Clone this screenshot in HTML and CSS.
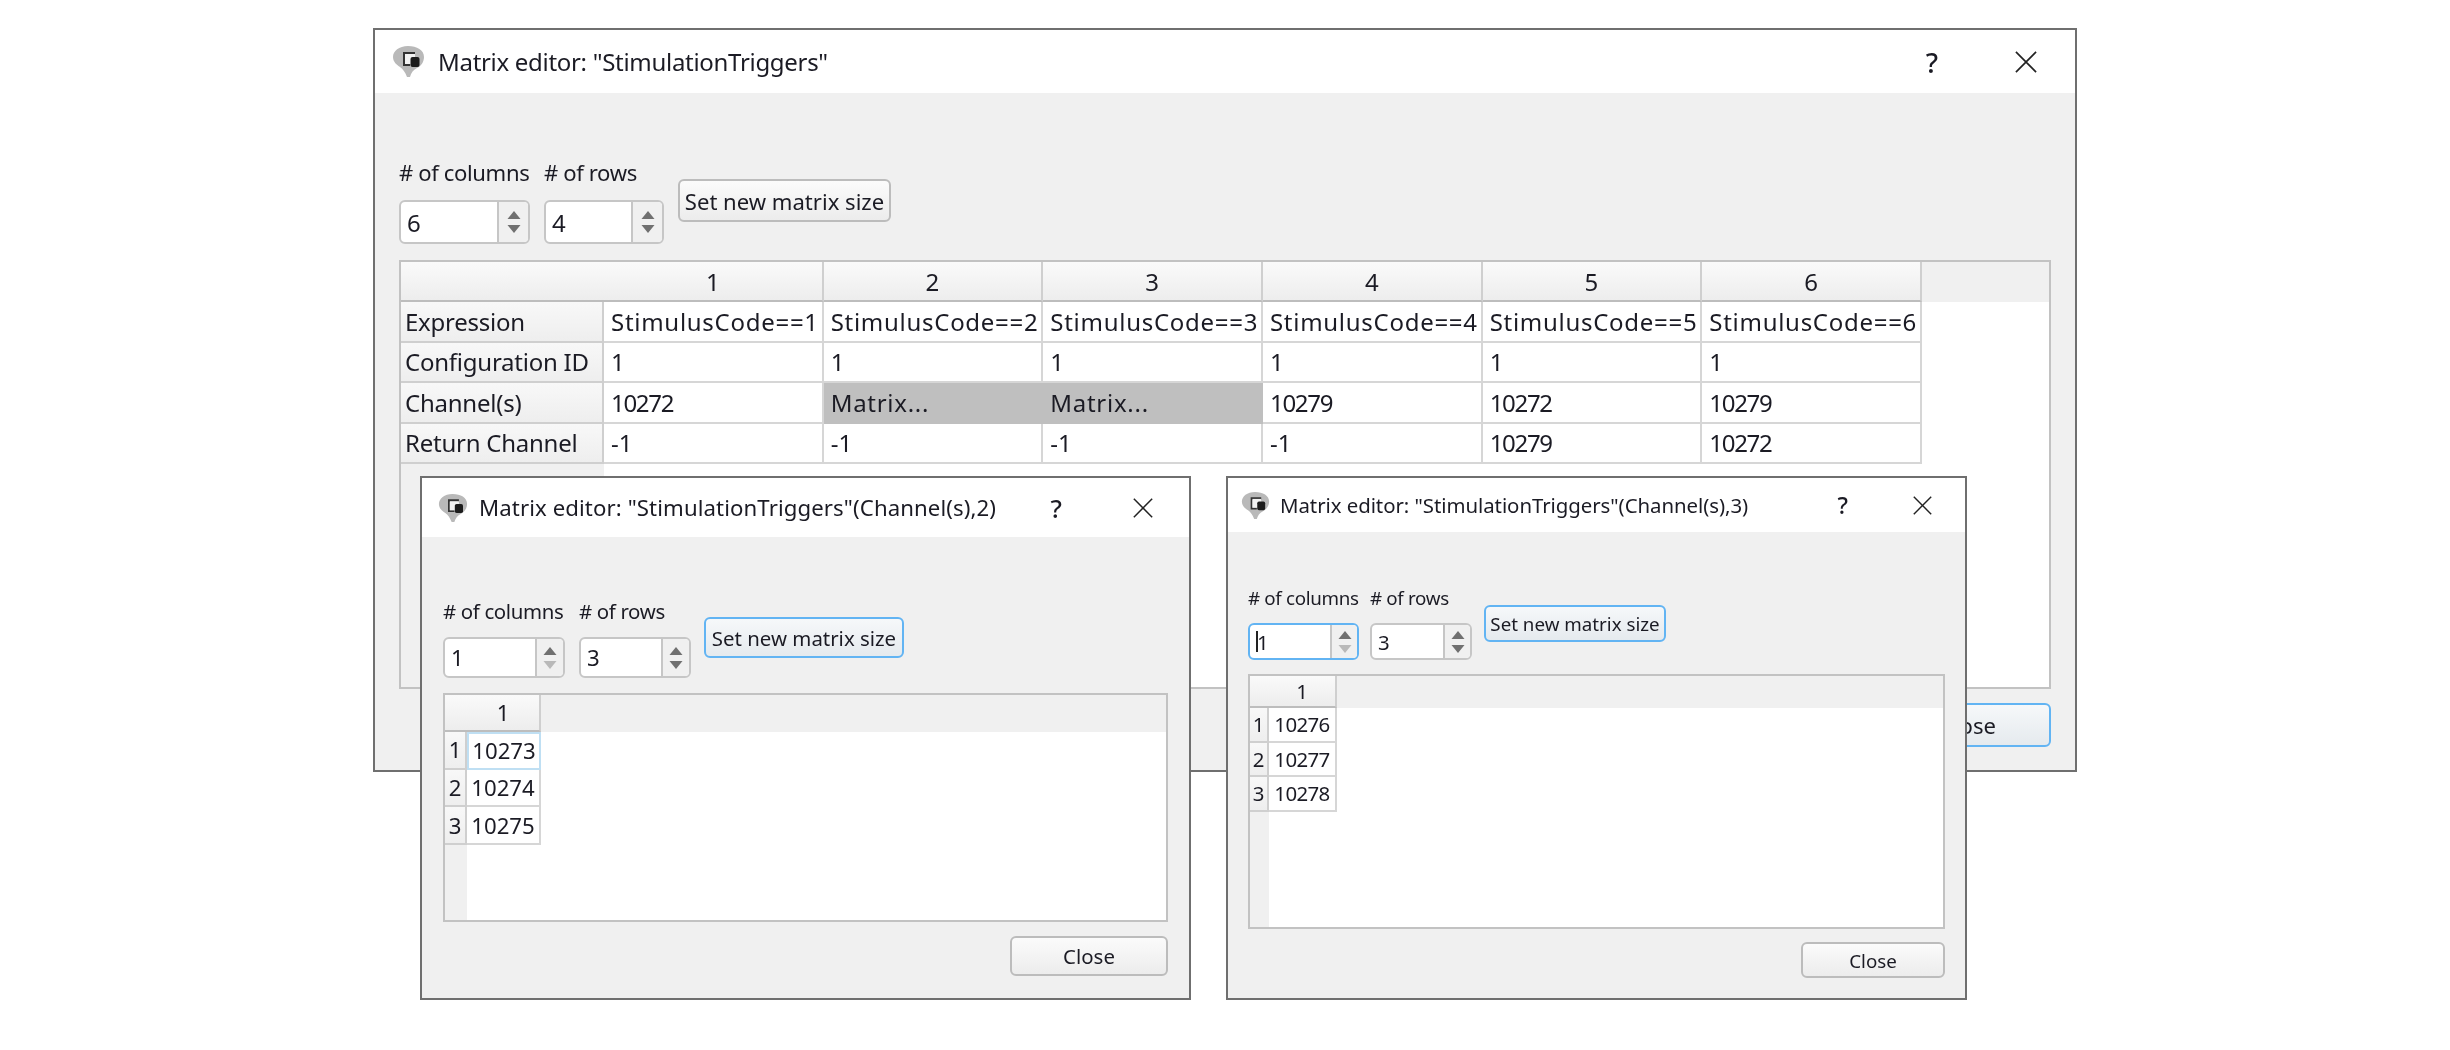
FILE: index.html
```html
<!DOCTYPE html>
<html lang="en">
<head>
<meta charset="utf-8">
<title>Matrix editor</title>
<link rel="stylesheet" href="styles.css">
</head>
<body>
<svg class="defs" width="0" height="0" aria-hidden="true">
  <symbol id="app" viewBox="0 0 33 33">
    <path d="M16 1C7 1 1 6 1 12c0 5 4 8 7 10 3 2 5 5 7 10h3c1-4 3-7 7-9 4-2 7-6 7-11C32 5 25 1 16 1z" fill="#b9b9b9"/>
    <path d="M11 7h12v3H13v9h5v2h-7z" fill="#333"/>
    <path d="M13 9h10v10H13z" fill="#f2f2f2"/>
    <rect x="18.500" y="12" width="9" height="10" rx="2" fill="#1c1c1c"/>
  </symbol>
  <symbol id="x" viewBox="0 0 24 24">
    <path d="M1 1l22 22M23 1L1 23" fill="none" stroke="#222" stroke-width="1.800"/>
  </symbol>
  <symbol id="up" viewBox="0 0 14 10"><path d="M7 1l6.500 8H.5z"/></symbol>
  <symbol id="down" viewBox="0 0 14 10"><path d="M7 9L.5 1h13z"/></symbol>
</svg>

<main class="desktop">

  <section class="dlg dlg-main">
    <header class="titlebar">
      <svg class="app-icon"><use href="#app"/></svg>
      <span class="title">Matrix editor: "StimulationTriggers"</span>
      <span class="help">?</span>
      <svg class="close-x"><use href="#x"/></svg>
    </header>
    <div class="body">
      <div class="controls">
        <div class="field f1">
          <label class="lbl"># of columns</label>
          <div class="spin"><span class="val">6</span><span class="arrows"><svg class="arr"><use href="#up"/></svg><svg class="arr"><use href="#down"/></svg></span></div>
        </div>
        <div class="field f2">
          <label class="lbl"># of rows</label>
          <div class="spin"><span class="val">4</span><span class="arrows"><svg class="arr"><use href="#up"/></svg><svg class="arr"><use href="#down"/></svg></span></div>
        </div>
        <button class="btn set">Set new matrix size</button>
      </div>
      <div class="tbl tbl-6">
        <div class="hc corner"></div>
        <div class="hc">1</div><div class="hc">2</div><div class="hc">3</div><div class="hc">4</div><div class="hc">5</div><div class="hc">6</div><div class="fill-top"></div>

        <div class="rh left">Expression</div>
        <div class="c word">StimulusCode==1</div><div class="c word">StimulusCode==2</div><div class="c word">StimulusCode==3</div><div class="c word">StimulusCode==4</div><div class="c word">StimulusCode==5</div><div class="c word">StimulusCode==6</div><div class="blank"></div>

        <div class="rh left">Configuration ID</div>
        <div class="c">1</div><div class="c">1</div><div class="c">1</div><div class="c">1</div><div class="c">1</div><div class="c">1</div><div class="blank"></div>

        <div class="rh left">Channel(s)</div>
        <div class="c num">10272</div><div class="c word sel">Matrix...</div><div class="c word sel">Matrix...</div><div class="c num">10279</div><div class="c num">10272</div><div class="c num">10279</div><div class="blank"></div>

        <div class="rh left">Return Channel</div>
        <div class="c">-1</div><div class="c">-1</div><div class="c">-1</div><div class="c">-1</div><div class="c num">10279</div><div class="c num">10272</div><div class="blank"></div>

        <div class="fill-left"></div>
      </div>
      <div class="footer"><button class="btn close focus">Close</button></div>
    </div>
  </section>

  <section class="dlg dlg-a">
    <header class="titlebar">
      <svg class="app-icon"><use href="#app"/></svg>
      <span class="title">Matrix editor: "StimulationTriggers"(Channel(s),2)</span>
      <span class="help">?</span>
      <svg class="close-x"><use href="#x"/></svg>
    </header>
    <div class="body">
      <div class="controls">
        <div class="field f1">
          <label class="lbl"># of columns</label>
          <div class="spin"><span class="val">1</span><span class="arrows"><svg class="arr"><use href="#up"/></svg><svg class="arr off"><use href="#down"/></svg></span></div>
        </div>
        <div class="field f2">
          <label class="lbl"># of rows</label>
          <div class="spin"><span class="val">3</span><span class="arrows"><svg class="arr"><use href="#up"/></svg><svg class="arr"><use href="#down"/></svg></span></div>
        </div>
        <button class="btn set focus">Set new matrix size</button>
      </div>
      <div class="tbl tbl-1">
        <div class="hc corner"></div><div class="hc">1</div><div class="fill-top"></div>
        <div class="rh">1</div><div class="c num mid cur">10273</div><div class="blank"></div>
        <div class="rh">2</div><div class="c num mid">10274</div><div class="blank"></div>
        <div class="rh">3</div><div class="c num mid">10275</div><div class="blank"></div>
        <div class="fill-left"></div>
      </div>
      <div class="footer"><button class="btn close">Close</button></div>
    </div>
  </section>

  <section class="dlg dlg-b">
    <header class="titlebar">
      <svg class="app-icon"><use href="#app"/></svg>
      <span class="title">Matrix editor: "StimulationTriggers"(Channel(s),3)</span>
      <span class="help">?</span>
      <svg class="close-x"><use href="#x"/></svg>
    </header>
    <div class="body">
      <div class="controls">
        <div class="field f1">
          <label class="lbl"># of columns</label>
          <div class="spin focus"><span class="val"><i class="caret"></i>1</span><span class="arrows"><svg class="arr"><use href="#up"/></svg><svg class="arr off"><use href="#down"/></svg></span></div>
        </div>
        <div class="field f2">
          <label class="lbl"># of rows</label>
          <div class="spin"><span class="val">3</span><span class="arrows"><svg class="arr"><use href="#up"/></svg><svg class="arr"><use href="#down"/></svg></span></div>
        </div>
        <button class="btn set focus">Set new matrix size</button>
      </div>
      <div class="tbl tbl-1">
        <div class="hc corner"></div><div class="hc">1</div><div class="fill-top"></div>
        <div class="rh">1</div><div class="c num mid">10276</div><div class="blank"></div>
        <div class="rh">2</div><div class="c num mid">10277</div><div class="blank"></div>
        <div class="rh">3</div><div class="c num mid">10278</div><div class="blank"></div>
        <div class="fill-left"></div>
      </div>
      <div class="footer"><button class="btn close">Close</button></div>
    </div>
  </section>

</main>
</body>
</html>
```
FILE: styles.css
```css
* { box-sizing: border-box; }
html, body { margin: 0; padding: 0; background: #fff; }
.defs { position: absolute; }
.desktop {
  position: relative;
  width: 2450px;
  height: 1050px;
  overflow: hidden;
  background: #fff;
  font-family: "Noto Sans", "Open Sans", sans-serif;
  color: #1b1b24;
}

/* Windows on a free canvas */
.dlg {
  position: absolute;
  display: flex;
  flex-direction: column;
  background: #f0f0f0;
  border: 2px solid #6f6f6f;
  font-size: var(--fs);
  filter: blur(0.45px);
}
.dlg-main {
  left: 373px; top: 28px; width: 1704px; height: 744px;
  --fs: 24px; --num-ls: -1.300px; --title-ls: -0.300px; --title-h: 63px; --pad: 24px; --pt: 65px;
  --lbl-h: 30px; --lbl-gap: 12px; --spin-h: 44px;
  --f1: 131px; --f2: 120px; --arrow: 31px; --fgap: 14px; --btn-w: 213px; --btn-h: 43px; --btn-top: 21px; --btn-left: 14px;
  --tbl-gap: 16px; --foot-gap: 14px; --foot-b: 23px; --close-w: 166px; --close-h: 44px;
  --icon: 33px; --icon-l: 17px; --title-l: 13px; --help-r: 137px; --x: 22px; --x-r: 38px;
}
.dlg-a {
  left: 420px; top: 476px; width: 771px; height: 524px; z-index: 2;
  --fs: 22.200px; --num-ls: 0; --title-ls: 0.100px; --title-h: 59px; --pad: 21px; --pt: 61px;
  --lbl-h: 28px; --lbl-gap: 11px; --spin-h: 41px;
  --f1: 122px; --f2: 112px; --arrow: 28px; --fgap: 14px; --btn-w: 200px; --btn-h: 41px; --btn-top: 19px; --btn-left: 13px;
  --tbl-gap: 15px; --foot-gap: 14px; --foot-b: 22px; --close-w: 158px; --close-h: 40px;
  --icon: 30px; --icon-l: 16px; --title-l: 11px; --help-r: 127px; --x: 20px; --x-r: 36px;
}
.dlg-b {
  left: 1226px; top: 476px; width: 741px; height: 524px; z-index: 2;
  --fs: 20.400px; --num-ls: -0.600px; --title-ls: -0.050px; --title-h: 54px; --pad: 20px; --pt: 54px;
  --lbl-h: 26px; --lbl-gap: 11px; --spin-h: 37px;
  --f1: 111px; --f2: 102px; --arrow: 27px; --fgap: 11px; --btn-w: 182px; --btn-h: 37px; --btn-top: 19px; --btn-left: 12px;
  --tbl-gap: 14px; --foot-gap: 13px; --foot-b: 20px; --close-w: 144px; --close-h: 36px;
  --icon: 29px; --icon-l: 13px; --title-l: 10px; --help-r: 117px; --x: 19px; --x-r: 33px;
}

/* Title bar */
.titlebar {
  display: flex;
  align-items: center;
  flex: none;
  height: var(--title-h);
  padding-left: var(--icon-l);
  background: #fff;
}
.app-icon { width: var(--icon); height: var(--icon); flex: none; }
.title { margin-left: var(--title-l); white-space: nowrap; flex: 1; letter-spacing: var(--title-ls); }
.help { position: absolute; right: var(--help-r); font-size: 1.150em; font-weight: 500; }
.close-x { width: var(--x); height: var(--x); margin-right: var(--x-r); flex: none; }

/* Dialog body */
.body {
  flex: 1;
  min-height: 0;
  display: flex;
  flex-direction: column;
  padding: var(--pt) var(--pad) var(--foot-b);
}
.controls { display: flex; align-items: flex-start; margin-bottom: var(--tbl-gap); flex: none; }
.field { display: flex; flex-direction: column; gap: var(--lbl-gap); }
.f1 { width: var(--f1); margin-right: var(--fgap); }
.f2 { width: var(--f2); }
.lbl { height: var(--lbl-h); line-height: calc(var(--lbl-h) - 2px); white-space: nowrap; font-size: 0.92em; letter-spacing: -0.017em; }

.spin {
  display: flex;
  height: var(--spin-h);
  border: 2px solid #c6c6c6;
  border-radius: 6px;
  background: #fff;
  overflow: hidden;
}
.spin.focus { border-color: #62b4f3; }
.val { flex: 1; display: flex; align-items: center; padding-left: 6px; position: relative; }
.caret { display: inline-block; width: 2px; height: 1.05em; background: #222; margin-right: -1px; }
.arrows {
  flex: none;
  width: var(--arrow);
  display: flex;
  flex-direction: column;
  align-items: center;
  justify-content: center;
  gap: 4px;
  background: #f0f0f0;
  border-left: 2px solid #c6c6c6;
}
.arr { width: 14px; height: 10px; fill: #707070; }
.arr.off { fill: #b9b9b9; }

.btn {
  font-family: inherit;
  font-size: 0.92em;
  letter-spacing: 0;
  color: inherit;
  padding: 0;
  border: 2px solid #bcbcbc;
  border-radius: 6px;
  background: linear-gradient(#fbfbfb, #ececec);
}
.btn.focus { border-color: #62b4f3; background: linear-gradient(#f6f8fa, #e5eaee); }
.set { width: var(--btn-w); height: var(--btn-h); margin-top: var(--btn-top); margin-left: var(--btn-left); }
.close { width: var(--close-w); height: var(--close-h); }

/* Tables */
.tbl {
  flex: 1;
  min-height: 0;
  display: grid;
  background: #fff;
  border: 2px solid #c2c2c2;
}
.tbl-6 {
  grid-template-columns: 203px repeat(6, 219.670px) 1fr;
  grid-template-rows: 40px repeat(4, 40.500px) 1fr;
}
.dlg-a .tbl-1 {
  grid-template-columns: 22px 74px 1fr;
  grid-template-rows: 37px repeat(3, 37.700px) 1fr;
}
.dlg-b .tbl-1 {
  grid-template-columns: 19px 68px 1fr;
  grid-template-rows: 32px repeat(3, 34.500px) 1fr;
}
.hc {
  display: flex;
  align-items: center;
  justify-content: center;
  background: linear-gradient(#fafafa, #ededed);
  border-right: 2px solid #cfcfcf;
  border-bottom: 2px solid #bdbdbd;
}
.hc.corner { border-right: 0; }
.fill-top { background: #f0f0f0; }
.rh {
  display: flex;
  align-items: center;
  justify-content: center;
  background: linear-gradient(#f8f8f8, #eeeeee);
  border-right: 2px solid #cfcfcf;
  border-bottom: 2px solid #cfcfcf;
  white-space: nowrap;
}
.rh.left { justify-content: flex-start; padding-left: 4px; letter-spacing: -0.01em; }
.c {
  display: flex;
  align-items: center;
  padding-left: 7px;
  background: #fff;
  border-right: 2px solid #d6d6d6;
  border-bottom: 2px solid #d6d6d6;
  white-space: nowrap;
}
.c.word { letter-spacing: 0.03em; }
.c.num { letter-spacing: var(--num-ls); }
.c.mid { justify-content: center; padding-left: 0; }
.c.sel { background: #bfbfbf; border-color: #bfbfbf; }
.c.cur { border: 2px solid #bfdff3; }
.blank { background: #fff; }
.fill-left { background: #f0f0f0; grid-column: 1; }

.footer { display: flex; justify-content: flex-end; margin-top: var(--foot-gap); flex: none; }
```
